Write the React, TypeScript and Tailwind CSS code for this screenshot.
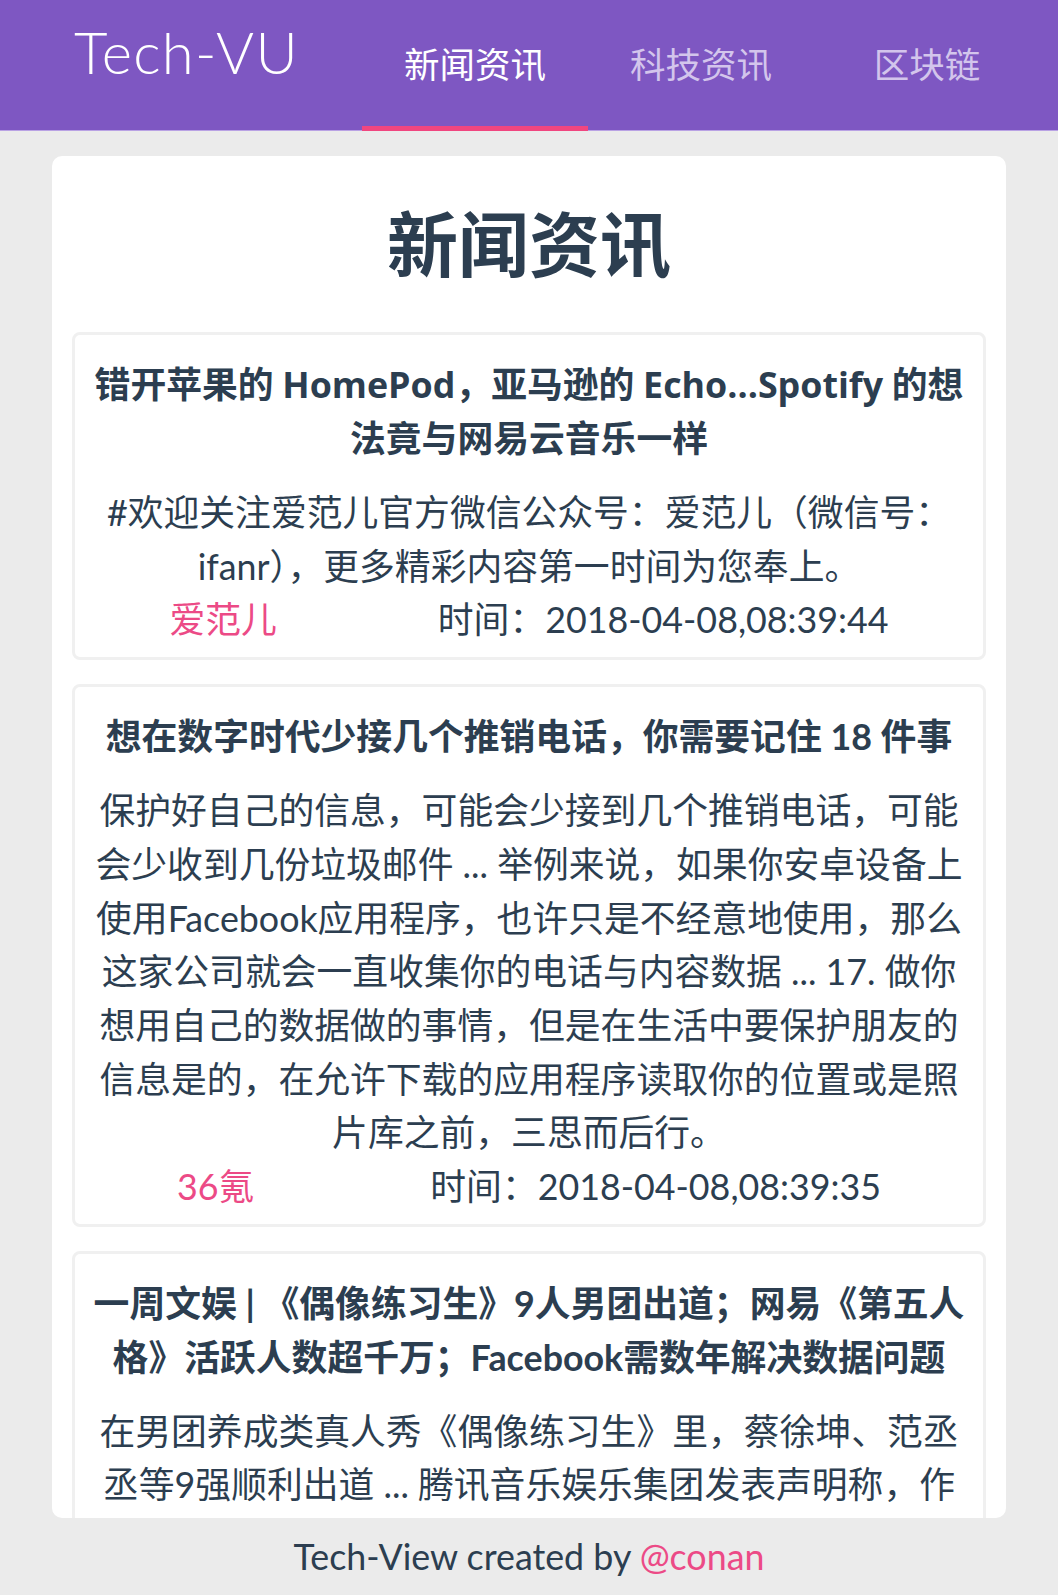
import React from "react";

const FONT = "font-['Lato','Noto_Sans_CJK_SC',sans-serif]";

type Item = {
  title: React.ReactNode;
  desc: string;
  source: string;
  time: string;
};

const Wide = ({ children }: { children: React.ReactNode }) => (
  <span className="font-['Open_Sans','Noto_Sans_CJK_SC',sans-serif]">{children}</span>
);

const items: Item[] = [
  {
    title: (
      <>
        错开苹果的 <Wide>HomePod</Wide>，亚马逊的 <Wide>Echo...Spotify</Wide> 的想法竟与网易云音乐一样
      </>
    ),
    desc: "#欢迎关注爱范儿官方微信公众号：爱范儿（微信号：ifanr），更多精彩内容第一时间为您奉上。",
    source: "爱范儿",
    time: "2018-04-08,08:39:44",
  },
  {
    title: "想在数字时代少接几个推销电话，你需要记住 18 件事",
    desc: "保护好自己的信息，可能会少接到几个推销电话，可能会少收到几份垃圾邮件 ... 举例来说，如果你安卓设备上使用Facebook应用程序，也许只是不经意地使用，那么这家公司就会一直收集你的电话与内容数据 ... 17. 做你想用自己的数据做的事情，但是在生活中要保护朋友的信息是的，在允许下载的应用程序读取你的位置或是照片库之前，三思而后行。",
    source: "36氪",
    time: "2018-04-08,08:39:35",
  },
  {
    title: "一周文娱 | 《偶像练习生》9人男团出道；网易《第五人格》活跃人数超千万；Facebook需数年解决数据问题",
    desc: "在男团养成类真人秀《偶像练习生》里，蔡徐坤、范丞丞等9强顺利出道 ... 腾讯音乐娱乐集团发表声明称，作为《偶像练习生》的独家音乐合作伙伴，将为出道的男团提供全方位的音乐支持。",
    source: "36氪",
    time: "2018-04-08,08:30:12",
  },
];

function NewsItem({ item }: { item: Item }) {
  return (
    <div className="mb-[24px] rounded-[8px] border-[3px] border-[#f0f0f0] px-[14px] pt-[23px] pb-[10px] text-center text-[#2c3e50]">
      <div className="text-[35.8px] font-bold leading-[53.7px]">{item.title}</div>
      <div className="mt-[20.5px] text-[35.8px] leading-[53.7px]">{item.desc}</div>
      <div className="flex justify-around text-[35.8px] leading-[53.7px]">
        <span className="text-[#ec4a86]">{item.source}</span>
        <span>时间：{item.time}</span>
      </div>
    </div>
  );
}

export default function App() {
  return (
    <div className={`${FONT} min-h-screen w-full bg-[#ebebeb]`}>
      <header className="flex h-[131px] border-b border-[#b9a2e4] bg-[#7e57c2]">
        <div className="w-[362px] pl-[74px] pt-[23px]">
          <span className="text-[58px] font-light leading-none tracking-[1.3px] text-white">Tech-VU</span>
        </div>
        <nav className="flex h-full">
          <div className="relative flex h-full w-[226px] items-center justify-center text-[35.5px] text-white">
            新闻资讯
            <div className="absolute bottom-[-1px] left-0 h-[5px] w-full bg-[#f0467f]" />
          </div>
          <div className="flex h-full w-[226px] items-center justify-center text-[35.5px] text-[#d3c5ec]">
            科技资讯
          </div>
          <div className="flex h-full w-[226px] items-center justify-center text-[35.5px] text-[#d3c5ec]">
            区块链
          </div>
        </nav>
      </header>

      <main className="mx-auto mt-[25px] h-[1362px] w-[954px] overflow-hidden rounded-[10px] bg-white px-[20px]">
        <h1 className="flex h-[176px] items-center justify-center text-[71px] font-bold text-[#2c3e50]">
          新闻资讯
        </h1>
        {items.map((it, i) => (
          <NewsItem key={i} item={it} />
        ))}
      </main>

      <footer className="flex h-[77px] items-center justify-center text-[35.8px] text-[#2c3e50]">
        <span>
          Tech-View created by <span className="text-[#ec4a86]">@conan</span>
        </span>
      </footer>
    </div>
  );
}
